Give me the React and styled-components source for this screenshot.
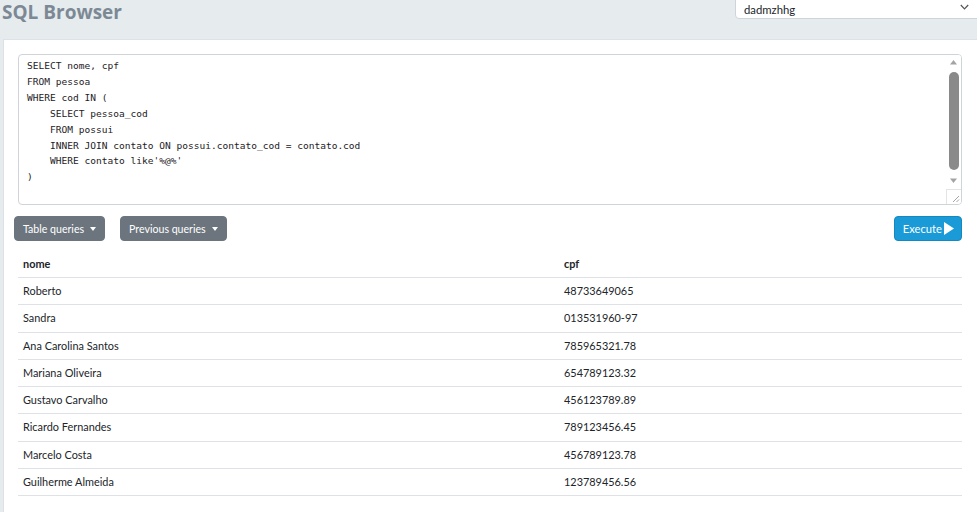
import React from "react";
import styled, { createGlobalStyle } from "styled-components";

const Global = createGlobalStyle`
  html, body { margin: 0; padding: 0; }
  body {
    background: #e6ebee;
    font-family: "Lato", "Open Sans", sans-serif;
    color: #212529;
    height: 512px;
    overflow: hidden;
  }
`;

const Page = styled.div`
  display: flex;
  flex-direction: column;
  height: 512px;
`;

const Header = styled.header`
  display: flex;
  justify-content: space-between;
  align-items: flex-start;
  height: 39px;
`;

const Title = styled.h1`
  margin: 0 0 0 2px;
  padding-top: 2px;
  font-family: "Open Sans", sans-serif;
  font-weight: 700;
  font-size: 19px;
  line-height: 20px;
  color: #7c8995;
`;

const SelectWrap = styled.div`
  position: relative;
  margin-top: -7px;
  width: 248px;
  margin-right: -6px;
`;

const Select = styled.select`
  appearance: none;
  width: 100%;
  height: 26px;
  border: 1px solid #ced4da;
  border-radius: 4px;
  background: #fff;
  padding: 6px 9px 0 8px;
  font-family: "Lato", sans-serif;
  font-size: 11.3px;
  color: #212529;
  outline: none;
`;

const Chevron = styled.svg`
  position: absolute;
  right: 14px;
  top: 11px;
  width: 9px;
  height: 6px;
  pointer-events: none;
`;

const Panel = styled.main`
  flex: 1;
  margin-left: 3px;
  background: #fff;
  border-left: 1px solid #dce3e8;
  border-top: 1px solid #dce3e8;
  padding: 14px 15px 0 14px;
  display: flex;
  flex-direction: column;
`;

const EditorFrame = styled.div`
  position: relative;
  width: 944px;
  height: 151px;
`;

const Editor = styled.textarea`
  display: block;
  box-sizing: border-box;
  width: 100%;
  height: 100%;
  border: 1px solid #cfd4d9;
  border-radius: 4px;
  padding: 3px 24px 3px 8px;
  font-family: "DejaVu Sans Mono", "Liberation Mono", monospace;
  font-size: 9.55px;
  line-height: 15.9px;
  color: #1e2226;
  resize: none;
  outline: none;
  white-space: pre;
  overflow: hidden;
`;

const ScrollBar = styled.div`
  position: absolute;
  top: 1px;
  right: 1px;
  bottom: 1px;
  width: 15px;
  display: flex;
  flex-direction: column;
  align-items: center;
  background: #fff;
  border-top-right-radius: 3px;
  border-bottom-right-radius: 3px;
`;

const Arrow = styled.svg`
  flex: none;
  width: 15px;
  height: 15px;
`;

const Track = styled.div`
  flex: 1;
  width: 15px;
  display: flex;
  flex-direction: column;
  align-items: center;
  padding: 2px 0 4px;
  box-sizing: border-box;
`;

const Thumb = styled.div`
  width: 10px;
  flex: 1;
  border-radius: 5px;
  background: #8a8a8a;
`;

const Corner = styled.svg`
  flex: none;
  width: 15px;
  height: 15px;
  box-sizing: border-box;
  border-top: 1px solid #e4e4e4;
  border-left: 1px solid #e4e4e4;
`;

const Toolbar = styled.div`
  display: flex;
  align-items: center;
  gap: 15px;
  margin: 11px 0 0 -4px;
  width: 948px;
`;

const Button = styled.button`
  display: inline-flex;
  align-items: center;
  height: 25px;
  box-sizing: border-box;
  padding: 0 ${(p) => (p.$primary ? "7px 0 8px" : "8px")};
  border-radius: 4px;
  border: 1px solid ${(p) => (p.$primary ? "#1688c0" : "#6c757d")};
  background: ${(p) => (p.$primary ? "#1a9bd7" : "#6c757d")};
  color: #fff;
  font-family: "Lato", sans-serif;
  font-size: ${(p) => (p.$primary ? "11.2px" : "10.6px")};
  cursor: pointer;
  margin-left: ${(p) => (p.$push ? "auto" : "0")};
`;

const Caret = styled.span`
  display: inline-block;
  margin-left: 6px;
  margin-top: 1px;
  border-top: 4px solid #fff;
  border-left: 3.5px solid transparent;
  border-right: 3.5px solid transparent;
`;

const Play = styled.svg`
  width: 10px;
  height: 13px;
  margin-left: 2px;
`;

const Table = styled.table`
  margin-top: 9px;
  width: 944px;
  border-collapse: collapse;
  font-family: "Lato", sans-serif;
  font-size: 10.9px;
`;

const Th = styled.th`
  text-align: left;
  font-weight: 700;
  padding: 5px 5px;
  line-height: 17px;
  border-bottom: 1px solid #dee2e6;
  width: ${(p) => p.$w || "auto"};
`;

const Td = styled.td`
  padding: 5px 5px;
  line-height: 16.25px;
  border-bottom: 1px solid #dee2e6;
`;

const sql = `SELECT nome, cpf
FROM pessoa
WHERE cod IN (
    SELECT pessoa_cod
    FROM possui
    INNER JOIN contato ON possui.contato_cod = contato.cod
    WHERE contato like'%@%'
)
`;

const rows = [
  ["Roberto", "48733649065"],
  ["Sandra", "013531960-97"],
  ["Ana Carolina Santos", "785965321.78"],
  ["Mariana Oliveira", "654789123.32"],
  ["Gustavo Carvalho", "456123789.89"],
  ["Ricardo Fernandes", "789123456.45"],
  ["Marcelo Costa", "456789123.78"],
  ["Guilherme Almeida", "123789456.56"],
];

export default function App() {
  return (
    <Page>
      <Global />
      <Header>
        <Title>SQL Browser</Title>
        <SelectWrap>
          <Select defaultValue="dadmzhhg">
            <option value="dadmzhhg">dadmzhhg</option>
          </Select>
          <Chevron viewBox="0 0 9 6">
            <polyline points="0.8,1 4.5,4.8 8.2,1" fill="none" stroke="#555" strokeWidth="1.2" />
          </Chevron>
        </SelectWrap>
      </Header>
      <Panel>
        <EditorFrame>
          <Editor defaultValue={sql} spellCheck={false} />
          <ScrollBar>
            <Arrow viewBox="0 0 15 15">
              <polygon points="7.5,5 11,9.5 4,9.5" fill="#a3a3a3" />
            </Arrow>
            <Track>
              <Thumb />
            </Track>
            <Arrow viewBox="0 0 15 15">
              <polygon points="4,4.5 11,4.5 7.5,9" fill="#a3a3a3" />
            </Arrow>
            <Corner viewBox="0 0 14 14">
              <line x1="12" y1="6" x2="6" y2="12" stroke="#9a9a9a" strokeWidth="0.9" />
              <line x1="12" y1="9.5" x2="9.5" y2="12" stroke="#9a9a9a" strokeWidth="0.9" />
            </Corner>
          </ScrollBar>
        </EditorFrame>
        <Toolbar>
          <Button>
            Table queries<Caret />
          </Button>
          <Button>
            Previous queries<Caret />
          </Button>
          <Button $primary $push>
            Execute
            <Play viewBox="0 0 10 13">
              <polygon points="0,0 10,6.5 0,13" fill="#fff" />
            </Play>
          </Button>
        </Toolbar>
        <Table>
          <thead>
            <tr>
              <Th $w="531px">nome</Th>
              <Th>cpf</Th>
            </tr>
          </thead>
          <tbody>
            {rows.map(([n, c]) => (
              <tr key={n}>
                <Td>{n}</Td>
                <Td>{c}</Td>
              </tr>
            ))}
          </tbody>
        </Table>
      </Panel>
    </Page>
  );
}
